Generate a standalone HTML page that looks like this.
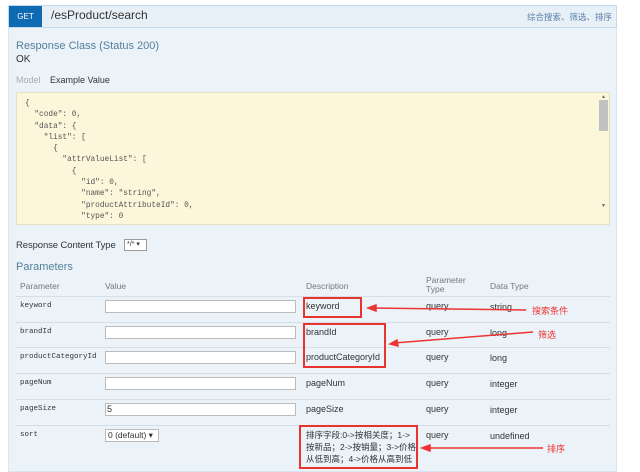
<!DOCTYPE html>
<html><head><meta charset="utf-8"><style>
*{margin:0;padding:0;box-sizing:border-box}
body{width:640px;height:472px;background:#fff;font-family:"Liberation Sans","Noto Sans CJK SC",sans-serif;position:relative;overflow:hidden;color:#333}
.a{position:absolute;white-space:nowrap}
.panel{position:absolute;left:8px;top:5px;width:609px;height:467px;background:#ebf3f9;border:1px solid #d8e6f1}
.hdr{position:absolute;left:8px;top:5px;width:609px;height:23px;background:#e7f0f7;border:1px solid #c3d9ec}
.get{position:absolute;left:9px;top:6px;width:33px;height:21px;background:#0f6ab4;color:#fff;font-size:8px;text-align:center;line-height:21px}
.code{position:absolute;left:16px;top:92px;width:594px;height:133px;background:#fcf6db;border:1px solid #e5e0c6;font-family:"Liberation Mono",monospace;font-size:7.8px;color:#555;line-height:11.3px;padding:6px 8px;white-space:pre;overflow:hidden}
.sb{position:absolute;left:599px;top:100px;width:9px;height:31px;background:#c1c1c1}
.mono{font-family:"Liberation Mono",monospace;font-size:7.5px;color:#333}
.inp{position:absolute;left:105px;width:191px;height:13px;background:#fff;border:1px solid #bbb;font-size:9px;padding-left:1px;line-height:11px}
.ln{position:absolute;left:16px;width:594px;height:1px;background:#d5dee6}
.t{font-size:9px;color:#333}
.h{font-size:8.5px;color:#777}
.red{position:absolute;border:2px solid #e8342f}
.rt{color:#e33;font-size:9px}
</style></head><body>
<div class="panel"></div>
<div class="hdr"></div>
<div class="get">GET</div>
<div class="a" style="left:51px;top:8px;font-size:12px;color:#333">/esProduct/search</div>
<div class="a" style="left:527px;top:11px;font-size:8.5px;color:#5a7ea8">综合搜索、筛选、排序</div>
<div class="a" style="left:16px;top:40px;font-size:11px;color:#547f9c">Response Class (Status 200)</div>
<div class="a" style="left:16px;top:54px;font-size:10px;color:#333">OK</div>
<div class="a" style="left:16px;top:75px;font-size:9px;color:#aaa">Model</div>
<div class="a" style="left:50px;top:75px;font-size:9px;color:#333">Example Value</div>
<div class="code">{
  "code": 0,
  "data": {
    "list": [
      {
        "attrValueList": [
          {
            "id": 0,
            "name": "string",
            "productAttributeId": 0,
            "type": 0</div>
<div class="sb"></div>
<div class="a" style="left:601px;top:94px;font-size:5px;color:#666">▲</div>
<div class="a" style="left:601px;top:203px;font-size:5px;color:#666">▼</div>
<div class="a" style="left:16px;top:240px;font-size:9.5px;letter-spacing:-0.1px">Response Content Type</div>
<div class="a" style="left:124px;top:239px;width:23px;height:12px;border:1px solid #999;background:#fff;font-size:7px;padding-left:2px;line-height:10px">*/* ▾</div>
<div class="a" style="left:16px;top:261px;font-size:11px;color:#547f9c">Parameters</div>
<div class="a h" style="left:20px;top:281px">Parameter</div>
<div class="a h" style="left:105px;top:281px">Value</div>
<div class="a h" style="left:306px;top:281px">Description</div>
<div class="a h" style="left:426px;top:276px;line-height:9px">Parameter<br>Type</div>
<div class="a h" style="left:490px;top:281px">Data Type</div>
<div class="ln" style="top:296px"></div>
<div class="ln" style="top:322px"></div>
<div class="ln" style="top:347px"></div>
<div class="ln" style="top:373px"></div>
<div class="ln" style="top:399px"></div>
<div class="ln" style="top:425px"></div>
<div class="a mono" style="left:20px;top:302px">keyword</div>
<div class="a mono" style="left:20px;top:328px">brandId</div>
<div class="a mono" style="left:20px;top:353px">productCategoryId</div>
<div class="a mono" style="left:20px;top:379px">pageNum</div>
<div class="a mono" style="left:20px;top:405px">pageSize</div>
<div class="a mono" style="left:20px;top:431px">sort</div>
<div class="inp" style="top:300px"></div>
<div class="inp" style="top:326px"></div>
<div class="inp" style="top:351px"></div>
<div class="inp" style="top:377px"></div>
<div class="inp" style="top:403px">5</div>
<div class="a" style="left:105px;top:429px;width:54px;height:13px;border:1px solid #bbb;background:#fff;font-size:8.5px;padding-left:2px;line-height:11px">0 (default) ▾</div>
<div class="a t" style="left:306px;top:301px">keyword</div>
<div class="a t" style="left:306px;top:327px">brandId</div>
<div class="a t" style="left:306px;top:352px">productCategoryId</div>
<div class="a t" style="left:306px;top:378px">pageNum</div>
<div class="a t" style="left:306px;top:404px">pageSize</div>
<div class="a" style="left:306px;top:429px;font-size:8.5px;line-height:12px;color:#333">排序字段:0->按相关度；1-><br>按新品；2->按销量；3->价格<br>从低到高；4->价格从高到低</div>
<div class="a t" style="left:426px;top:301px">query</div>
<div class="a t" style="left:426px;top:327px">query</div>
<div class="a t" style="left:426px;top:352px">query</div>
<div class="a t" style="left:426px;top:378px">query</div>
<div class="a t" style="left:426px;top:404px">query</div>
<div class="a t" style="left:426px;top:430px">query</div>
<div class="a t" style="left:490px;top:302px">string</div>
<div class="a t" style="left:490px;top:328px">long</div>
<div class="a t" style="left:490px;top:353px">long</div>
<div class="a t" style="left:490px;top:379px">integer</div>
<div class="a t" style="left:490px;top:405px">integer</div>
<div class="a t" style="left:490px;top:431px">undefined</div>
<div class="red" style="left:303px;top:297px;width:59px;height:21px"></div>
<div class="red" style="left:303px;top:323px;width:83px;height:45px"></div>
<div class="red" style="left:299px;top:425px;width:119px;height:44px"></div>
<svg class="a" style="left:0;top:0" width="640" height="472">
<g stroke="#e33" stroke-width="1.5" fill="#e33">
<line x1="372" y1="308" x2="526" y2="310"/><polygon points="368,308 376,305 376,311"/>
<line x1="394" y1="343" x2="533" y2="332"/><polygon points="390,344 397,340 398,346"/>
<line x1="426" y1="448" x2="543" y2="448"/><polygon points="422,448 430,445 430,451"/>
</g></svg>
<div class="a rt" style="left:532px;top:304px">搜索条件</div>
<div class="a rt" style="left:538px;top:328px">筛选</div>
<div class="a rt" style="left:547px;top:442px">排序</div>
</body></html>
